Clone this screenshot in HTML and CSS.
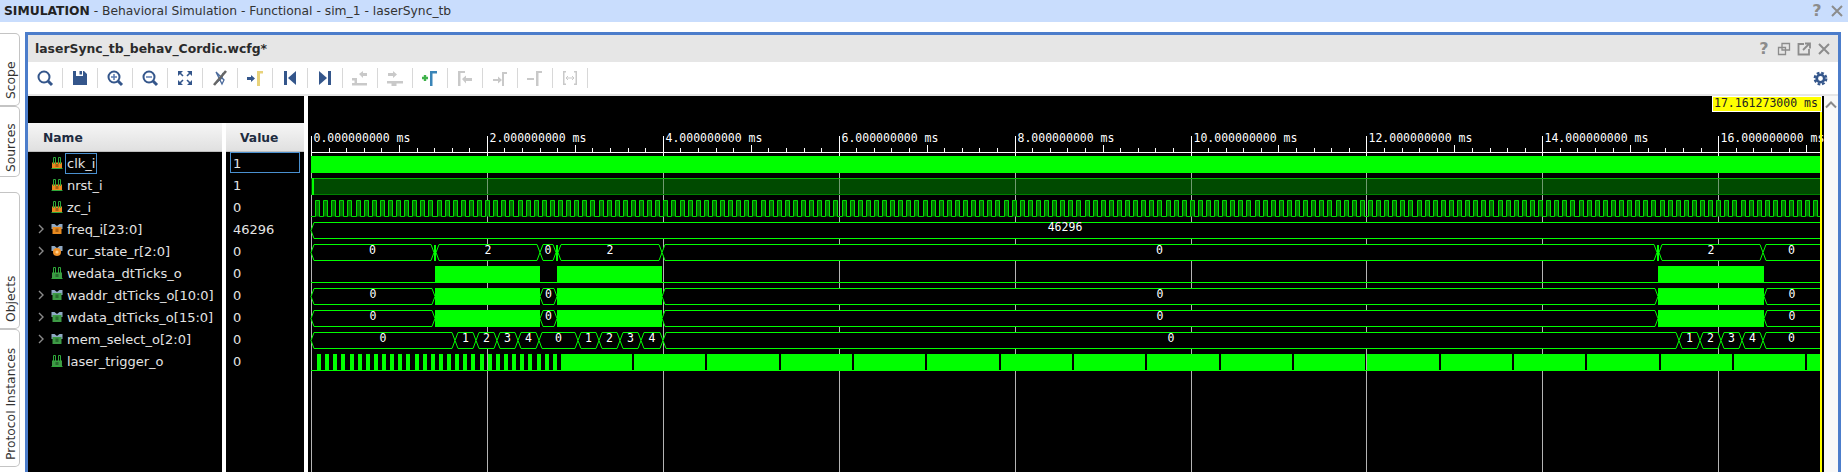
FILE: index.html
```html
<!DOCTYPE html>
<html lang="en">
<head>
    <meta charset="UTF-8">
    <title>SIMULATION - laserSync_tb</title>
    <link rel="stylesheet" href="styles.css">
</head>
<body>
    <svg class="defs" width="0" height="0">
        <defs>
            <symbol id="i-search" viewBox="0 0 18 18"><circle cx="8" cy="8" r="5.5" fill="none" stroke="#34568b" stroke-width="2"/><path d="M12 12l4 4" stroke="#34568b" stroke-width="3"/></symbol>
            <symbol id="i-save" viewBox="0 0 18 18"><path d="M2 2h3v5h7V2h1l3 3v11H2z" fill="#34568b"/><rect x="8.5" y="2" width="2.5" height="3.5" fill="#34568b"/></symbol>
            <symbol id="i-zoomin" viewBox="0 0 18 18"><circle cx="8" cy="8" r="5.5" fill="none" stroke="#34568b" stroke-width="2"/><path d="M12 12l4 4" stroke="#34568b" stroke-width="3"/><path d="M5 8h6M8 5v6" stroke="#5b7bb0" stroke-width="1.5"/></symbol>
            <symbol id="i-zoomout" viewBox="0 0 18 18"><circle cx="8" cy="8" r="5.5" fill="none" stroke="#34568b" stroke-width="2"/><path d="M12 12l4 4" stroke="#34568b" stroke-width="3"/><path d="M5 8h6" stroke="#5b7bb0" stroke-width="1.5"/></symbol>
            <symbol id="i-fit" viewBox="0 0 18 18"><path d="M2 2h5L2 7zM16 2v5l-5-5zM2 16v-5l5 5zM16 16h-5l5-5z" fill="#34568b"/><path d="M3 3l4 4M15 3l-4 4M3 15l4-4M15 15l-4-4" stroke="#34568b" stroke-width="1.6"/></symbol>
            <symbol id="i-noswap" viewBox="0 0 18 18"><path d="M5 3l8 8-2 4-6-12zM12 4l-1 5-6 5" fill="none" stroke="#4a6a9c" stroke-width="1.3"/><path d="M3 16L15 2" stroke="#666" stroke-width="2.6"/></symbol>
            <symbol id="i-cursor" viewBox="0 0 18 18"><path d="M1 8h4V6l4 3.5L5 13v-2H1z" fill="#34568b"/><path d="M11 17V2h6v2.5h-3V17z" fill="#e8d27a"/></symbol>
            <symbol id="i-first" viewBox="0 0 18 18"><rect x="3" y="2" width="3" height="14" fill="#34568b"/><path d="M15 2v14L7 9z" fill="#34568b"/></symbol>
            <symbol id="i-last" viewBox="0 0 18 18"><rect x="12" y="2" width="3" height="14" fill="#34568b"/><path d="M3 2v14l8-7z" fill="#34568b"/></symbol>
            <symbol id="i-prevedge" viewBox="0 0 18 18"><path d="M1 9h5v5h10v2.500H1V14h2.500v-2.500H1z" fill="#c9c9c9"/><path d="M8 5l4-3v2h4v3h-4v2z" fill="#c9c9c9"/></symbol>
            <symbol id="i-nextedge" viewBox="0 0 18 18"><path d="M1 12h7v5H5.500v-2.500H1zM8 12h9v2.500h-6.500V17H8z" fill="#c9c9c9"/><path d="M2 4h5V2l4 3.500L7 9V7H2z" fill="#c9c9c9"/></symbol>
            <symbol id="i-addmarker" viewBox="0 0 18 18"><path d="M1 9h6M4 6v6" stroke="#3fb24a" stroke-width="2.4"/><path d="M9 17V2h7v2.4h-4.5V17z" fill="#3a85b8"/></symbol>
            <symbol id="i-prevmarker" viewBox="0 0 18 18"><path d="M2 17V2h7v2H4.500v13z" fill="#c9c9c9"/><path d="M6 10l4-3.500V9h6v3h-6v2.500z" fill="#c9c9c9"/></symbol>
            <symbol id="i-nextmarker" viewBox="0 0 18 18"><path d="M2 10h5V7.500l4 3.500-4 3.500V12H2z" fill="#c9c9c9"/><path d="M11 17V3h5v2h-3v12z" fill="#c9c9c9"/></symbol>
            <symbol id="i-delmarker" viewBox="0 0 18 18"><rect x="1" y="9" width="7" height="2" fill="#c9c9c9"/><path d="M10 17V2h6v2h-3.500v13z" fill="#c9c9c9"/></symbol>
            <symbol id="i-swapcur" viewBox="0 0 18 18"><path d="M2 2h3v1.500H3.500v11H5V16H2zM16 2h-3v1.500h1.500v11H13V16h3z" fill="#c9c9c9"/><path d="M5 9h8M5 9l2-2M5 9l2 2M13 9l-2-2M13 9l-2 2" stroke="#c9c9c9" fill="none"/></symbol>
            <symbol id="i-gear" viewBox="0 0 18 18"><circle cx="9" cy="9" r="4.500" fill="none" stroke="#34568b" stroke-width="3.200"/><circle cx="9" cy="9" r="7" fill="none" stroke="#34568b" stroke-width="2.600" stroke-dasharray="3.300 2.200"/></symbol>
            <symbol id="i-close" viewBox="0 0 16 16"><path d="M3 3l10 10M13 3L3 13" stroke="#8c8c8c" stroke-width="2"/></symbol>
            <symbol id="i-restore" viewBox="0 0 16 16"><path d="M6 2.500h7.500V9H6zM2.500 6.500H9.500V13.500H2.500z" fill="none" stroke="#8c8c8c" stroke-width="1.300"/></symbol>
            <symbol id="i-popout" viewBox="0 0 16 16"><path d="M8 3H2.500v10.500H13V8" fill="none" stroke="#8c8c8c" stroke-width="1.800"/><path d="M7 9l6-6M9 2.500h5v5" fill="none" stroke="#8c8c8c" stroke-width="1.800"/></symbol>
            <symbol id="i-chev" viewBox="0 0 6 10"><path d="M1 1l4 4-4 4" fill="none" stroke="#8a8a8a" stroke-width="1.400"/></symbol>
            <symbol id="s-bit-in" viewBox="0 0 12 12"><rect x="1" y="5.500" width="10" height="6" fill="#e88a1f"/><rect x="4.500" y="7" width="3" height="3" fill="#a85f10"/><path d="M2.500 7V0.500H4.500V7M7.500 7V0.500H9.500V7M0.500 11.500H11.500" fill="none" stroke="#2fa83a" stroke-width="1"/></symbol>
            <symbol id="s-bit-out" viewBox="0 0 12 12"><rect x="1" y="5.500" width="10" height="6" fill="#3d9a45"/><rect x="4.500" y="7" width="3" height="3" fill="#276b2e"/><path d="M2.500 7V0.500H4.500V7M7.500 7V0.500H9.500V7M0.500 11.500H11.500" fill="none" stroke="#2fa83a" stroke-width="1"/></symbol>
            <symbol id="s-bus-in" viewBox="0 0 12 12"><path d="M0.500 1h3l2.500 2 2.500-2h3v5h-11z" fill="#8fa9c4"/><rect x="1.500" y="4" width="9" height="7" fill="#e88a1f"/><rect x="4.500" y="5.500" width="3" height="3.500" fill="#a85f10"/></symbol>
            <symbol id="s-bus-reg" viewBox="0 0 12 12"><path d="M0.500 1h3l2.500 2 2.500-2h3v5h-11z" fill="#8fa9c4"/><circle cx="6" cy="7" r="4" fill="#f0922a"/><circle cx="6" cy="7" r="1.600" fill="#ffd08a"/></symbol>
            <symbol id="s-bus-out" viewBox="0 0 12 12"><path d="M0.500 1h3l2.500 2 2.500-2h3v5h-11z" fill="#8fa9c4"/><rect x="1.500" y="4" width="9" height="7" fill="#3d9a45"/><rect x="4.500" y="5.500" width="3" height="3.500" fill="#276b2e"/></symbol>
        </defs>
    </svg>

    <header class="topbar">
        <div class="topbar-title"><b>SIMULATION</b> - Behavioral Simulation - Functional - sim_1 - laserSync_tb</div>
        <div class="win-btns">
            <span class="help">?</span>
            <svg class="win-icon"><use href="#i-close"/></svg>
        </div>
    </header>

    <div class="workspace">
        <nav class="tabs">
            <div class="tab tab-scope">Scope</div>
            <div class="tab tab-sources">Sources</div>
            <div class="tab tab-objects">Objects</div>
            <div class="tab tab-protocol">Protocol Instances</div>
        </nav>

        <section class="panel">
            <div class="panel-title">
                <span class="panel-name">laserSync_tb_behav_Cordic.wcfg*</span>
                <div class="panel-btns">
                    <span class="help">?</span>
                    <svg class="win-icon"><use href="#i-restore"/></svg>
                    <svg class="win-icon"><use href="#i-popout"/></svg>
                    <svg class="win-icon"><use href="#i-close"/></svg>
                </div>
            </div>

            <div class="toolbar">
                <span class="tool"><svg><use href="#i-search"/></svg></span>
                <span class="tool"><svg><use href="#i-save"/></svg></span>
                <span class="tool"><svg><use href="#i-zoomin"/></svg></span>
                <span class="tool"><svg><use href="#i-zoomout"/></svg></span>
                <span class="tool"><svg><use href="#i-fit"/></svg></span>
                <span class="tool"><svg><use href="#i-noswap"/></svg></span>
                <span class="tool"><svg><use href="#i-cursor"/></svg></span>
                <span class="tool"><svg><use href="#i-first"/></svg></span>
                <span class="tool"><svg><use href="#i-last"/></svg></span>
                <span class="tool"><svg><use href="#i-prevedge"/></svg></span>
                <span class="tool"><svg><use href="#i-nextedge"/></svg></span>
                <span class="tool"><svg><use href="#i-addmarker"/></svg></span>
                <span class="tool"><svg><use href="#i-prevmarker"/></svg></span>
                <span class="tool"><svg><use href="#i-nextmarker"/></svg></span>
                <span class="tool"><svg><use href="#i-delmarker"/></svg></span>
                <span class="tool"><svg><use href="#i-swapcur"/></svg></span>
                <svg class="gear"><use href="#i-gear"/></svg>
            </div>

            <div class="panes">
                <div class="signals">
                    <div class="signals-top"></div>
                    <div class="signals-cols">
                        <div class="col-names">
                            <div class="col-head">Name</div>
                            <div class="sig"><svg class="sig-icon"><use href="#s-bit-in"/></svg><span class="sig-name focus">clk_i</span></div>
                            <div class="sig"><svg class="sig-icon"><use href="#s-bit-in"/></svg><span class="sig-name">nrst_i</span></div>
                            <div class="sig"><svg class="sig-icon"><use href="#s-bit-in"/></svg><span class="sig-name">zc_i</span></div>
                            <div class="sig"><svg class="chev"><use href="#i-chev"/></svg><svg class="sig-icon"><use href="#s-bus-in"/></svg><span class="sig-name">freq_i[23:0]</span></div>
                            <div class="sig"><svg class="chev"><use href="#i-chev"/></svg><svg class="sig-icon"><use href="#s-bus-reg"/></svg><span class="sig-name">cur_state_r[2:0]</span></div>
                            <div class="sig"><svg class="sig-icon"><use href="#s-bit-out"/></svg><span class="sig-name">wedata_dtTicks_o</span></div>
                            <div class="sig"><svg class="chev"><use href="#i-chev"/></svg><svg class="sig-icon"><use href="#s-bus-out"/></svg><span class="sig-name">waddr_dtTicks_o[10:0]</span></div>
                            <div class="sig"><svg class="chev"><use href="#i-chev"/></svg><svg class="sig-icon"><use href="#s-bus-out"/></svg><span class="sig-name">wdata_dtTicks_o[15:0]</span></div>
                            <div class="sig"><svg class="chev"><use href="#i-chev"/></svg><svg class="sig-icon"><use href="#s-bus-out"/></svg><span class="sig-name">mem_select_o[2:0]</span></div>
                            <div class="sig"><svg class="sig-icon"><use href="#s-bit-out"/></svg><span class="sig-name">laser_trigger_o</span></div>
                        </div>
                        <div class="col-values">
                            <div class="col-head">Value</div>
                            <div class="val focus">1</div>
                            <div class="val">1</div>
                            <div class="val">0</div>
                            <div class="val">46296</div>
                            <div class="val">0</div>
                            <div class="val">0</div>
                            <div class="val">0</div>
                            <div class="val">0</div>
                            <div class="val">0</div>
                            <div class="val">0</div>
                        </div>
                    </div>
                </div>
                <div class="splitter"></div>
                <svg id="waves" class="waves" viewBox="308 96 1516 376"></svg>
                <div class="scrollbar"><svg class="scroll-up" viewBox="0 0 12 8"><path d="M1 6.500l5-5 5 5" fill="none" stroke="#8a8a8a" stroke-width="2"/></svg></div>
            </div>
        </section>
    </div>
    <script src="waves.js"></script>
</body>
</html>
```
FILE: styles.css
```css
body {
    font-family: "DejaVu Sans", sans-serif;
    font-size: 13px;
    background-color: white;
    margin: 0;
    padding: 0;
    height: 472px;
    overflow: hidden;
    color: #222;
}

.defs {
    display: block;
    height: 0;
}

.topbar {
    height: 22px;
    background-color: #c9ddfd;
    display: flex;
    align-items: center;
    justify-content: space-between;
    padding: 0 3px 0 4px;
}

.topbar-title {
    color: #333;
    font-size: 12.3px;
}

.topbar-title b {
    color: #222;
}

.win-btns,
.panel-btns {
    display: flex;
    align-items: center;
    gap: 4px;
}

.help {
    width: 16px;
    text-align: center;
    font-weight: bold;
    font-size: 16px;
    line-height: 16px;
    color: #8c8c8c;
}

.win-icon {
    width: 16px;
    height: 16px;
}

.workspace {
    display: flex;
    height: 450px;
    padding-top: 10px;
    box-sizing: border-box;
}

.tabs {
    width: 20px;
    margin-right: 5px;
    padding-top: 1px;
    flex: none;
}

.tab {
    box-sizing: border-box;
    width: 20px;
    writing-mode: vertical-rl;
    transform: rotate(180deg);
    border: 1px solid #c4c4c4;
    border-right: none;
    border-radius: 5px 0 0 5px;
    padding: 6px 3px 0 0;
    color: #333;
    font-size: 12.3px;
    line-height: 16px;
}

.tab-scope { height: 73px; }
.tab-sources { height: 71px; padding-top: 4px; }
.tab-objects { height: 137px; margin-top: 15px; }
.tab-protocol { height: 138px; }

.panel {
    width: 1816px;
    box-sizing: border-box;
    border: 3px solid #4c7dcb;
    border-bottom: none;
    display: flex;
    flex-direction: column;
}

.panel-title {
    height: 27px;
    background-color: #e6e6e6;
    display: flex;
    align-items: center;
    justify-content: space-between;
    padding: 0 6px 0 7px;
    flex: none;
}

.panel-name {
    font-weight: bold;
    font-size: 12.4px;
    color: #2b2b2b;
}

.toolbar {
    height: 34px;
    box-sizing: border-box;
    border-bottom: 2px solid #e6e6e6;
    display: flex;
    align-items: center;
    padding-left: 0;
    flex: none;
}

.tool {
    width: 35px;
    height: 20px;
    box-sizing: border-box;
    border-right: 1px solid #d8d8d8;
    display: flex;
    align-items: center;
    justify-content: center;
}

.tool svg {
    width: 18px;
    height: 18px;
}

.gear {
    width: 15px;
    height: 15px;
    margin-left: auto;
    margin-right: 10px;
}

.panes {
    display: flex;
    flex: 1;
    min-height: 0;
}

.signals {
    width: 276px;
    flex: none;
    background-color: black;
    display: flex;
    flex-direction: column;
}

.signals-top {
    height: 27px;
    flex: none;
}

.signals-cols {
    flex: 1;
    display: flex;
    gap: 4px;
    background-color: white;
}

.col-names {
    width: 194px;
    background-color: black;
    color: #e4e4e4;
}

.col-values {
    width: 78px;
    background-color: black;
    color: #e4e4e4;
}

.col-head {
    height: 29px;
    box-sizing: border-box;
    background: linear-gradient(#f6f6f6, #e0e0e0);
    border-bottom: 1px solid #bdbdbd;
    color: #1d2b40;
    font-weight: bold;
    font-size: 12.3px;
    line-height: 30px;
    padding-left: 15px;
}

.col-values .col-head {
    padding-left: 14px;
}

.sig {
    height: 22px;
    display: flex;
    align-items: center;
    padding-left: 23px;
    position: relative;
}

.chev {
    width: 6px;
    height: 10px;
    position: absolute;
    left: 10px;
    top: 6px;
}

.sig-icon {
    width: 12px;
    height: 12px;
    margin-right: 2px;
}

.sig-name {
    border: 1px solid transparent;
    padding: 0 1px;
    height: 19px;
    line-height: 19px;
}

.val {
    height: 21px;
    margin: 0 4px 1px 4px;
    border: 1px solid transparent;
    padding-left: 2px;
    line-height: 21px;
    box-sizing: border-box;
}

.focus {
    border-color: #4a90d0;
}

.splitter {
    width: 4px;
    background-color: white;
    flex: none;
}

.waves {
    width: 1516px;
    height: 376px;
    background-color: black;
    flex: none;
    display: block;
}

.scrollbar {
    width: 14px;
    background-color: #f8f8f8;
    flex: none;
    display: flex;
    justify-content: center;
    align-items: flex-start;
    padding-top: 5px;
    box-sizing: border-box;
}

.scroll-up {
    width: 12px;
    height: 8px;
}
```
FILE: waves.js
```js
// waveform canvas, coordinates are the same as the page pixels
const svg = document.getElementById('waves');
const NS = 'http://www.w3.org/2000/svg';
const X0 = 311;
const PX_MS = 87.95;
const END = 1820;
const GREEN = '#00ff00';

function add(tag, attrs, text) {
    const el = document.createElementNS(NS, tag);
    for (const k in attrs) el.setAttribute(k, attrs[k]);
    if (text !== undefined) el.textContent = text;
    svg.appendChild(el);
    return el;
}

function label(x, y, str, fill, anchor) {
    add('text', { x: x, y: y, fill: fill, 'text-anchor': anchor || 'middle',
        'font-family': 'DejaVu Sans Mono', 'font-size': '11.5' }, str);
}

function rowTop(i) {
    return 152 + 22 * i;
}

// grid lines and ruler
for (let ms = 0; ms <= 16; ms += 2) {
    const x = Math.round(X0 + ms * PX_MS) + 0.5;
    add('path', { d: `M${x} 153V472`, stroke: '#b4b4b4' });
    add('path', { d: `M${x} 136V156`, stroke: 'white' });
    label(x + 2, 142, ms.toFixed(9) + ' ms', 'white', 'start');
}
add('path', { d: `M${X0} 152.5H${END}`, stroke: 'white' });
for (let t = 0; t < 86; t++) {
    if (t % 10 === 0) continue;
    const x = Math.round(X0 + t * 0.2 * PX_MS) + 0.5;
    const h = t % 5 === 0 ? 7 : 4;
    add('path', { d: `M${x} ${152 - h}V152`, stroke: 'white' });
}

// clk_i is too fast to show, it is a solid block
add('rect', { x: X0, y: 156, width: END - X0, height: 17, fill: GREEN });

// nrst_i
add('rect', { x: X0, y: 178, width: END - X0, height: 17, fill: '#004a00' });
add('path', { d: `M${X0} 178.5H${END}`, stroke: '#00c000' });
add('path', { d: `M${X0} 194.5H${END}`, stroke: '#008000' });
add('rect', { x: X0 + 1, y: 178, width: 2, height: 17, fill: GREEN });
for (let ms = 2; ms <= 16; ms += 2) {
    const x = Math.round(X0 + ms * PX_MS) + 0.5;
    add('path', { d: `M${x} 179V194`, stroke: '#6f9a6f' });
}

// zc_i
let zc = `M${X0} 216.5`;
for (let x = 315; x < END; x += 8.1) {
    const a = Math.round(x) + 0.5;
    const b = Math.round(x + 4) + 0.5;
    if (b > END) break;
    add('rect', { x: a, y: 200.5, width: b - a, height: 16, fill: '#007000' });
    zc += `H${a}V200.5H${b}V216.5`;
}
zc += `H${END}`;
add('path', { d: zc, fill: 'none', stroke: '#00e000' });

// bus values, the hexagon points meet where the value changes
function hex(top, a, b, text) {
    const y1 = top + 4.5, y2 = top + 20.5, m = top + 12.5, w = 3;
    let d = `M${a} ${m}L${a + w} ${y1}H${b - w}L${b} ${m}L${b - w} ${y2}H${a + w}Z`;
    if (b >= END) d = `M${END} ${y1}H${a + w}L${a} ${m}L${a + w} ${y2}H${END}`;
    add('path', { d: d, fill: 'black', stroke: GREEN });
    if (text !== undefined) label((a + b) / 2, top + 14, text, 'white');
}

function solid(top, a, b) {
    add('rect', { x: a, y: top + 4, width: b - a, height: 17, fill: GREEN });
}

// freq_i
hex(rowTop(3), X0, END);
label(1065, rowTop(3) + 13, '46296', 'white');

// cur_state_r
const cs = rowTop(4);
hex(cs, X0, 434, '0');
hex(cs, 436, 540, '2');
hex(cs, 540, 556, '0');
hex(cs, 558, 662, '2');
hex(cs, 662, 1657, '0');
hex(cs, 1659, 1763, '2');
hex(cs, 1763, END, '0');
[434, 556, 1657].forEach(x => add('rect', { x: x, y: cs + 5, width: 2, height: 16, fill: GREEN }));

// wedata_dtTicks_o, sits low and then goes high
const we = rowTop(5);
add('path', { d: `M${X0} ${we + 20.5}H${END}`, stroke: GREEN });
solid(we, 435, 540);
solid(we, 557, 662);
solid(we, 1658, 1764);

// waddr and wdata look the same
[6, 7].forEach(r => {
    const top = rowTop(r);
    hex(top, X0, 435, '0');
    hex(top, 540, 557, '0');
    hex(top, 662, 1658, '0');
    hex(top, 1764, END, '0');
    solid(top, 435, 540);
    solid(top, 557, 662);
    solid(top, 1658, 1764);
});

// mem_select_o
const mem = rowTop(8);
const memEdges = [
    [X0, 455, '0'], [455, 476, '1'], [476, 497, '2'], [497, 518, '3'], [518, 539, '4'],
    [539, 578, '0'], [578, 599, '1'], [599, 620, '2'], [620, 641, '3'], [641, 663, '4'],
    [663, 1679, '0'], [1679, 1700, '1'], [1700, 1721, '2'], [1721, 1742, '3'], [1742, 1763, '4'],
    [1763, END, '0']
];
memEdges.forEach(s => hex(mem, s[0], s[1], s[2]));

// laser_trigger_o: pulses first, then high with a short low every period
const las = rowTop(9);
add('path', { d: `M${X0} ${las + 20.5}H${END}`, stroke: GREEN });
for (let x = 317; x < 556; x += 8.13) {
    add('rect', { x: Math.round(x), y: las + 4, width: 4, height: 17, fill: GREEN });
}
let from = 561;
for (let x = 632; x < END; x += 73.33) {
    const g = Math.round(x);
    add('rect', { x: from, y: las + 4, width: g - from, height: 17, fill: GREEN });
    from = g + 2;
}
add('rect', { x: from, y: las + 4, width: END - from, height: 17, fill: GREEN });

// cursor and its time label
add('rect', { x: END, y: 96, width: 2, height: 376, fill: '#ffff00' });
add('rect', { x: 1712.5, y: 96.5, width: 109, height: 15, fill: '#ffff00', stroke: 'white' });
label(1714, 107, '17.161273000 ms', '#222', 'start');
```
